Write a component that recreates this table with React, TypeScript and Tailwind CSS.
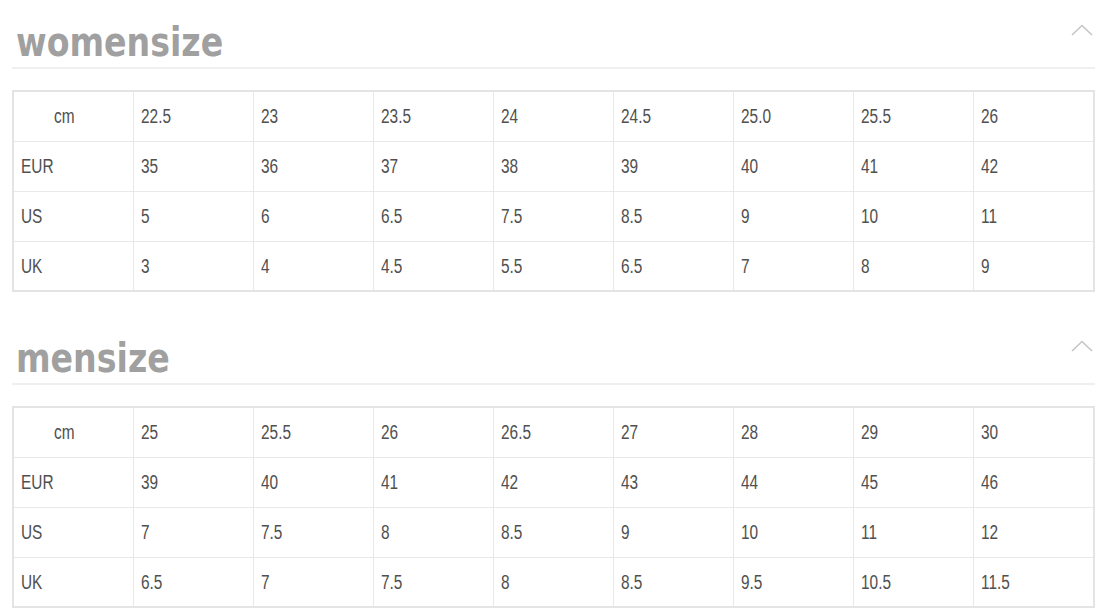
import React from 'react'

interface SizeTableProps {
  title: string
  rows: string[][]
  first?: boolean
}

const women: string[][] = [
  ['cm', '22.5', '23', '23.5', '24', '24.5', '25.0', '25.5', '26'],
  ['EUR', '35', '36', '37', '38', '39', '40', '41', '42'],
  ['US', '5', '6', '6.5', '7.5', '8.5', '9', '10', '11'],
  ['UK', '3', '4', '4.5', '5.5', '6.5', '7', '8', '9'],
]

const men: string[][] = [
  ['cm', '25', '25.5', '26', '26.5', '27', '28', '29', '30'],
  ['EUR', '39', '40', '41', '42', '43', '44', '45', '46'],
  ['US', '7', '7.5', '8', '8.5', '9', '10', '11', '12'],
  ['UK', '6.5', '7', '7.5', '8', '8.5', '9.5', '10.5', '11.5'],
]

// 折叠箭头
const ChevronUp = () => (
  <svg width="22" height="12" viewBox="0 0 22 12" fill="none" className="mt-[2px] mr-[2px]">
    <path d="M1 11 L11 1.5 L21 11" stroke="#c4c4c4" strokeWidth="1.5" />
  </svg>
)

const SizeTable: React.FC<SizeTableProps> = ({ title, rows, first = false }) => {
  return (
    <section className={first ? '' : 'mt-[46px]'}>
      <div className={`flex items-start justify-between border-b-2 border-[#efefef] pb-[5px] ${first ? 'pt-[22px]' : ''}`}>
        <h2 className="h-[40px] pl-[4px] text-[40px] leading-[40px] font-bold text-[#a0a0a0] font-['DejaVu_Sans',sans-serif]">
          <span className="inline-block origin-left scale-x-[0.83]">{title}</span>
        </h2>
        <ChevronUp />
      </div>

      <table className="mt-[21px] w-full table-fixed border-collapse border-2 border-[#e4e4e4]">
        <tbody>
          {rows.map((row, i) => (
            <tr key={i}>
              {row.map((cell, j) => (
                <td
                  key={j}
                  className={`h-[50px] border border-[#e8e8e8] align-middle text-[20px] text-[#505050] font-['Liberation_Sans',Arial,sans-serif] ${
                    i === 0 && j === 0 ? 'pl-[40px]' : 'pl-[7px]'
                  }`}
                >
                  <span className="inline-block origin-left scale-x-[0.77]">{cell}</span>
                </td>
              ))}
            </tr>
          ))}
        </tbody>
      </table>
    </section>
  )
}

export default function App() {
  return (
    <div className="w-[1113px] h-[610px] bg-white pl-[12px] pr-[18px]">
      <SizeTable title="womensize" rows={women} first />
      <SizeTable title="mensize" rows={men} />
    </div>
  )
}
